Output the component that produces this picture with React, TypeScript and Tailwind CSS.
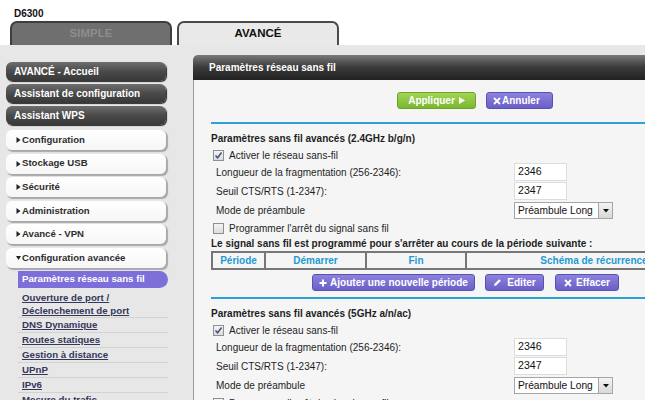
import React from "react";

function Tri({ down }: { down?: boolean }) {
  return (
    <svg width="5" height="6" viewBox="0 0 5 6" className="mr-[1px] shrink-0">
      {down ? <polygon points="0,1 5,1 2.5,5" fill="#222" /> : <polygon points="0.5,0 4.5,3 0.5,6" fill="#222" />}
    </svg>
  );
}

function DarkItem({ label }: { label: string }) {
  return (
    <div className="h-[19px] rounded-[6px] bg-gradient-to-b from-[#6e6e6e] via-[#4a4a4a] to-[#383838] shadow-[1px_1px_1px_#2a2a2a] flex items-center pl-[8px] text-white font-bold text-[10px]">
      {label}
    </div>
  );
}

function MenuItem({ label, open }: { label: string; open?: boolean }) {
  return (
    <div className="h-[20px] rounded-[6px] bg-gradient-to-b from-white to-[#f6f6f6] shadow-[1.5px_1.5px_1px_#a8a8a8] flex items-center pl-[10px] text-[#2d2d2d] font-bold text-[9.6px]">
      <Tri down={open} />
      <span>{label}</span>
    </div>
  );
}

function SubLink({ children, tall }: { children: React.ReactNode; tall?: boolean }) {
  return (
    <div
      className={
        "border-b border-[#d2d2d2] pl-[4px] text-[#34375a] font-bold text-[9.7px] underline " +
        (tall ? "pt-[1px] leading-[13px]" : "h-[15px] flex items-center")
      }
    >
      {children}
    </div>
  );
}

function Check({ checked }: { checked?: boolean }) {
  return (
    <span className="w-[11px] h-[11px] border border-[#8e8f8f] bg-gradient-to-b from-[#f4f4f4] to-[#dcdcdc] flex items-center justify-center shrink-0">
      {checked && (
        <svg width="9" height="9" viewBox="0 0 9 9">
          <path d="M1.5 4.5 L3.6 6.8 L7.6 1.5" stroke="#3f4f86" strokeWidth="1.5" fill="none" />
        </svg>
      )}
    </span>
  );
}

function CheckRow({ label, checked, h = "h-[16px]" }: { label: string; checked?: boolean; h?: string }) {
  return (
    <div className={h + " flex items-center pl-[2px]"}>
      <Check checked={checked} />
      <span className="ml-[5px]">{label}</span>
    </div>
  );
}

function FieldRow({ label, value }: { label: string; value: string }) {
  return (
    <div className="h-[19px] flex items-start">
      <div className="w-[303px] pl-[5px] h-[18px] flex items-center">{label}</div>
      <div className="w-[53px] h-[18px] bg-white border border-[#dcdcdc] flex items-center pl-[3px] text-[10.6px] text-[#111]">
        {value}
      </div>
    </div>
  );
}

function SelectRow({ label }: { label: string }) {
  return (
    <div className="h-[19px] flex items-center">
      <div className="w-[303px] pl-[5px]">{label}</div>
      <div className="w-[99px] h-[17px] bg-white border border-[#a5a5a5] flex items-center justify-between pl-[3px] text-[10.2px] text-[#111]">
        <span>Préambule Long</span>
        <span className="w-[14px] h-[15px] border-l border-[#a5a5a5] bg-gradient-to-b from-[#f4f4f4] to-[#d8d8d8] flex items-center justify-center">
          <svg width="6" height="4" viewBox="0 0 6 4">
            <polygon points="0,0 6,0 3,3.5" fill="#111" />
          </svg>
        </span>
      </div>
    </div>
  );
}

function XIcon() {
  return (
    <svg width="8" height="8" viewBox="0 0 8 8" className="shrink-0">
      <path d="M1 1 L7 7 M7 1 L1 7" stroke="white" strokeWidth="1.8" />
    </svg>
  );
}

function PurpleBtn({ w, children }: { w: string; children: React.ReactNode }) {
  return (
    <div
      className={
        w +
        " h-[17px] rounded-[3px] border border-[#5b51b3] bg-gradient-to-b from-[#8c82de] to-[#6a5fc6] flex items-center justify-center gap-[3px] text-white font-bold text-[10px]"
      }
    >
      {children}
    </div>
  );
}

function Section({ title }: { title: string }) {
  return (
    <>
      <div className="mt-[7px] h-[14px] flex items-center font-bold">{title}</div>
      <div className="mt-[2px]">
        <CheckRow label="Activer le réseau sans-fil" checked />
      </div>
      <FieldRow label="Longueur de la fragmentation (256-2346):" value="2346" />
      <FieldRow label="Seuil CTS/RTS (1-2347):" value="2347" />
      <SelectRow label="Mode de préambule" />
    </>
  );
}

export default function App() {
  return (
    <div className="w-[647px] h-[400px] overflow-hidden bg-white font-['Liberation_Sans',Arial,sans-serif] text-[10px] text-[#1e1e1e]">
      <div className="h-[21px] pl-[14px] pt-[6px] font-bold text-[10px] text-[#111]">D6300</div>
      <div className="flex items-end h-[24px] pl-[10px] gap-[5px]">
        <div className="w-[162px] h-[24px] rounded-t-[7px] border-2 border-b-0 border-[#3e3e3e] bg-[#6f6f6f] flex items-center justify-center font-bold text-[11.5px] text-[#8d8d8d]">
          SIMPLE
        </div>
        <div className="w-[162px] h-[24px] rounded-t-[7px] border-2 border-b-0 border-[#4a4a4a] bg-[#e9e9e9] flex items-center justify-center font-bold text-[11.5px] text-[#111]">
          AVANCÉ
        </div>
      </div>
      <div className="w-[645px] h-[355px] bg-[#e7e7e7] flex">
        <div className="w-[193px] shrink-0 pl-[6px] pt-[17px]">
          <div className="w-[160px] flex flex-col gap-[3px]">
            <DarkItem label="AVANCÉ - Accueil" />
            <DarkItem label="Assistant de configuration" />
            <DarkItem label="Assistant WPS" />
          </div>
          <div className="w-[160px] mt-[5px] flex flex-col gap-[3.6px]">
            <MenuItem label="Configuration" />
            <MenuItem label="Stockage USB" />
            <MenuItem label="Sécurité" />
            <MenuItem label="Administration" />
            <MenuItem label="Avancé - VPN" />
            <MenuItem label="Configuration avancée" open />
          </div>
          <div className="ml-[12px] w-[150px] mt-[3px]">
            <div className="h-[17px] rounded-r-full bg-[#7c6fda] flex items-center pl-[4px] text-white font-bold text-[9.7px]">
              Paramètres réseau sans fil
            </div>
            <div className="mt-[2px]">
              <SubLink tall>
                Ouverture de port /<br />
                Déclenchement de port
              </SubLink>
              <SubLink>DNS Dynamique</SubLink>
              <SubLink>Routes statiques</SubLink>
              <SubLink>Gestion à distance</SubLink>
              <SubLink>UPnP</SubLink>
              <SubLink>IPv6</SubLink>
              <SubLink>Mesure du trafic</SubLink>
            </div>
          </div>
        </div>
        <div className="flex-1 mt-[10px] flex flex-col min-w-0">
          <div className="h-[25px] shrink-0 rounded-tl-[5px] bg-gradient-to-b from-[#7a7a7a] via-[#3a3a3a] to-[#222] flex items-center pl-[16px] text-white font-bold text-[10px]">
            Paramètres réseau sans fil
          </div>
          <div className="flex-1 bg-[#f5f5f5] border-l border-[#9c9c9c] pl-[17px] overflow-hidden">
            <div className="mt-[12px] flex gap-[10px] ml-[186px]">
              <div className="w-[79px] h-[17px] rounded-[3px] border border-[#6ea22a] bg-gradient-to-b from-[#a2d455] to-[#7bb72e] flex items-center justify-center gap-[4px] text-white font-bold text-[10px]">
                <span>Appliquer</span>
                <svg width="6" height="7" viewBox="0 0 6 7">
                  <polygon points="0,0 6,3.5 0,7" fill="white" />
                </svg>
              </div>
              <div className="w-[67px] h-[17px] rounded-[3px] border border-[#5b51b3] bg-gradient-to-b from-[#8c82de] to-[#6a5fc6] flex items-center pl-[6px] gap-[1px] text-white font-bold text-[10px]">
                <XIcon />
                <span>Annuler</span>
              </div>
            </div>
            <div className="mt-[13px] h-[2px] bg-[#2aa2d4]" />
            <Section title="Paramètres sans fil avancés (2.4GHz b/g/n)" />
            <CheckRow label="Programmer l'arrêt du signal sans fil" />
            <div className="h-[14px] flex items-center font-bold whitespace-nowrap">
              Le signal sans fil est programmé pour s'arrêter au cours de la période suivante :
            </div>
            <div className="mt-[1px] w-[510px] h-[19px] flex border-2 border-r-0 border-[#767676] font-bold text-[#1d9ad3]">
              <div className="w-[51px] flex items-center justify-center">Période</div>
              <div className="w-[101px] border-l-2 border-[#767676] flex items-center justify-center">Démarrer</div>
              <div className="w-[100px] border-l-2 border-[#767676] flex items-center justify-center">Fin</div>
              <div className="flex-1 border-l-2 border-[#767676] flex items-center justify-center whitespace-nowrap">
                Schéma de récurrence
              </div>
            </div>
            <div className="mt-[4px] flex gap-[10px] ml-[101px]">
              <PurpleBtn w="w-[163px]">
                <svg width="8" height="8" viewBox="0 0 8 8">
                  <path d="M4 0.5 V7.5 M0.5 4 H7.5" stroke="white" strokeWidth="2" />
                </svg>
                <span>Ajouter une nouvelle période</span>
              </PurpleBtn>
              <PurpleBtn w="w-[59px]">
                <svg width="9" height="9" viewBox="0 0 9 9">
                  <path d="M1 8 L1.6 5.8 L6.2 1.2 L7.8 2.8 L3.2 7.4 Z" fill="white" />
                </svg>
                <span className="ml-[2px]">Editer</span>
              </PurpleBtn>
              <div className="ml-[1px]">
                <PurpleBtn w="w-[64px]">
                  <XIcon />
                  <span className="ml-[1px]">Effacer</span>
                </PurpleBtn>
              </div>
            </div>
            <div className="mt-[6px] h-[2px] bg-[#2aa2d4]" />
            <Section title="Paramètres sans fil avancés (5GHz a/n/ac)" />
            <CheckRow label="Programmer l'arrêt du signal sans fil" />
          </div>
        </div>
      </div>
    </div>
  );
}
